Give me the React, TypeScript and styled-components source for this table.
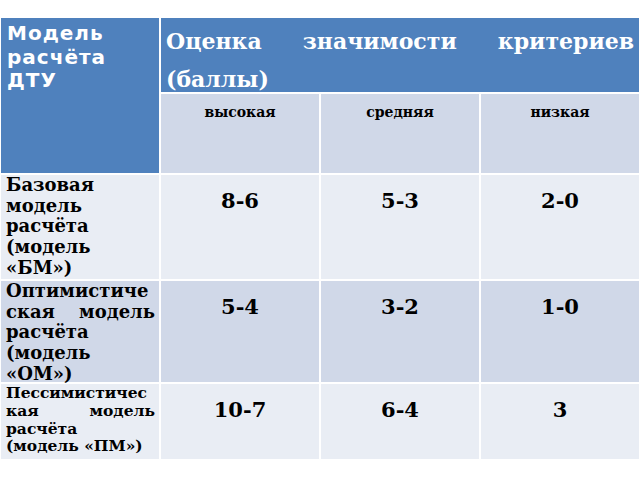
import styled, { createGlobalStyle } from 'styled-components';

const GlobalStyle = createGlobalStyle`
  body {
    margin: 0;
    background: #ffffff;
  }
`;

type Tone = 'light' | 'dark';

interface Row {
  label: string;
  labelSize: number;
  tone: Tone;
  values: string[];
}

const rows: Row[] = [
  { label: 'Базовая модель расчёта (модель «БМ»)', labelSize: 18, tone: 'light', values: ['8-6', '5-3', '2-0'] },
  { label: 'Оптимистиче\u200Bская модель расчёта (модель «ОМ»)', labelSize: 18, tone: 'dark', values: ['5-4', '3-2', '1-0'] },
  { label: 'Пессимистичес\u200Bкая модель расчёта (модель «ПМ»)', labelSize: 15.5, tone: 'light', values: ['10-7', '6-4', '3'] },
];

const levels = ['высокая', 'средняя', 'низкая'];

const App = () => (
  <>
    <GlobalStyle />
    <Page>
      <Table>
        <CornerCell>Модель расчёта ДТУ</CornerCell>
        <TitleCell>Оценка значимости критериев (баллы)</TitleCell>
        {levels.map((level) => (
          <LevelCell key={level}>{level}</LevelCell>
        ))}
        {rows.map((row) => (
          <RowGroup key={row.label} row={row} />
        ))}
      </Table>
    </Page>
  </>
);

const RowGroup = ({ row }: { row: Row }) => (
  <>
    <LabelCell $tone={row.tone} $size={row.labelSize}>
      {row.label}
    </LabelCell>
    {row.values.map((v, i) => (
      <ValueCell key={i} $tone={row.tone}>
        {v}
      </ValueCell>
    ))}
  </>
);

export default App;

const Page = styled.div`
  width: 640px;
  height: 480px;
  padding: 18px 0 0 1px;
  box-sizing: border-box;
`;

const Table = styled.div`
  display: grid;
  grid-template-columns: repeat(4, 158px);
  grid-template-rows: 74px 79px 104px 101px 75px;
  gap: 2px;
  background: #ffffff;
`;

const CornerCell = styled.div`
  grid-row: span 2;
  background: #4f81bd;
  color: #ffffff;
  font-family: 'DejaVu Sans', 'Liberation Sans', sans-serif;
  font-weight: bold;
  font-size: 20px;
  letter-spacing: 1px;
  line-height: 23.5px;
  padding: 4px 6px;
`;

const TitleCell = styled.div`
  grid-column: span 3;
  background: #4f81bd;
  color: #ffffff;
  font-family: 'DejaVu Serif', 'Liberation Serif', serif;
  font-weight: bold;
  font-size: 22px;
  line-height: 38px;
  text-align: justify;
  padding: 4px 5px 0 5px;
`;

const bg = (tone: Tone) => (tone === 'dark' ? '#d0d8e8' : '#e9edf4');

const LevelCell = styled.div`
  background: #d0d8e8;
  color: #000000;
  font-family: 'DejaVu Serif', 'Liberation Serif', serif;
  font-weight: bold;
  font-size: 14px;
  text-align: center;
  padding-top: 10px;
`;

const LabelCell = styled.div<{ $tone: Tone; $size: number }>`
  background: ${({ $tone }) => bg($tone)};
  color: #000000;
  font-family: 'DejaVu Serif', 'Liberation Serif', serif;
  font-weight: bold;
  font-size: ${({ $size }) => $size}px;
  line-height: 1.15;
  text-align: justify;
  overflow-wrap: anywhere;
  padding: 0 4px 0 5px;
`;

const ValueCell = styled.div<{ $tone: Tone }>`
  background: ${({ $tone }) => bg($tone)};
  color: #000000;
  font-family: 'DejaVu Serif', 'Liberation Serif', serif;
  font-weight: bold;
  font-size: 21px;
  line-height: 26px;
  text-align: center;
  padding-top: 13px;
`;
